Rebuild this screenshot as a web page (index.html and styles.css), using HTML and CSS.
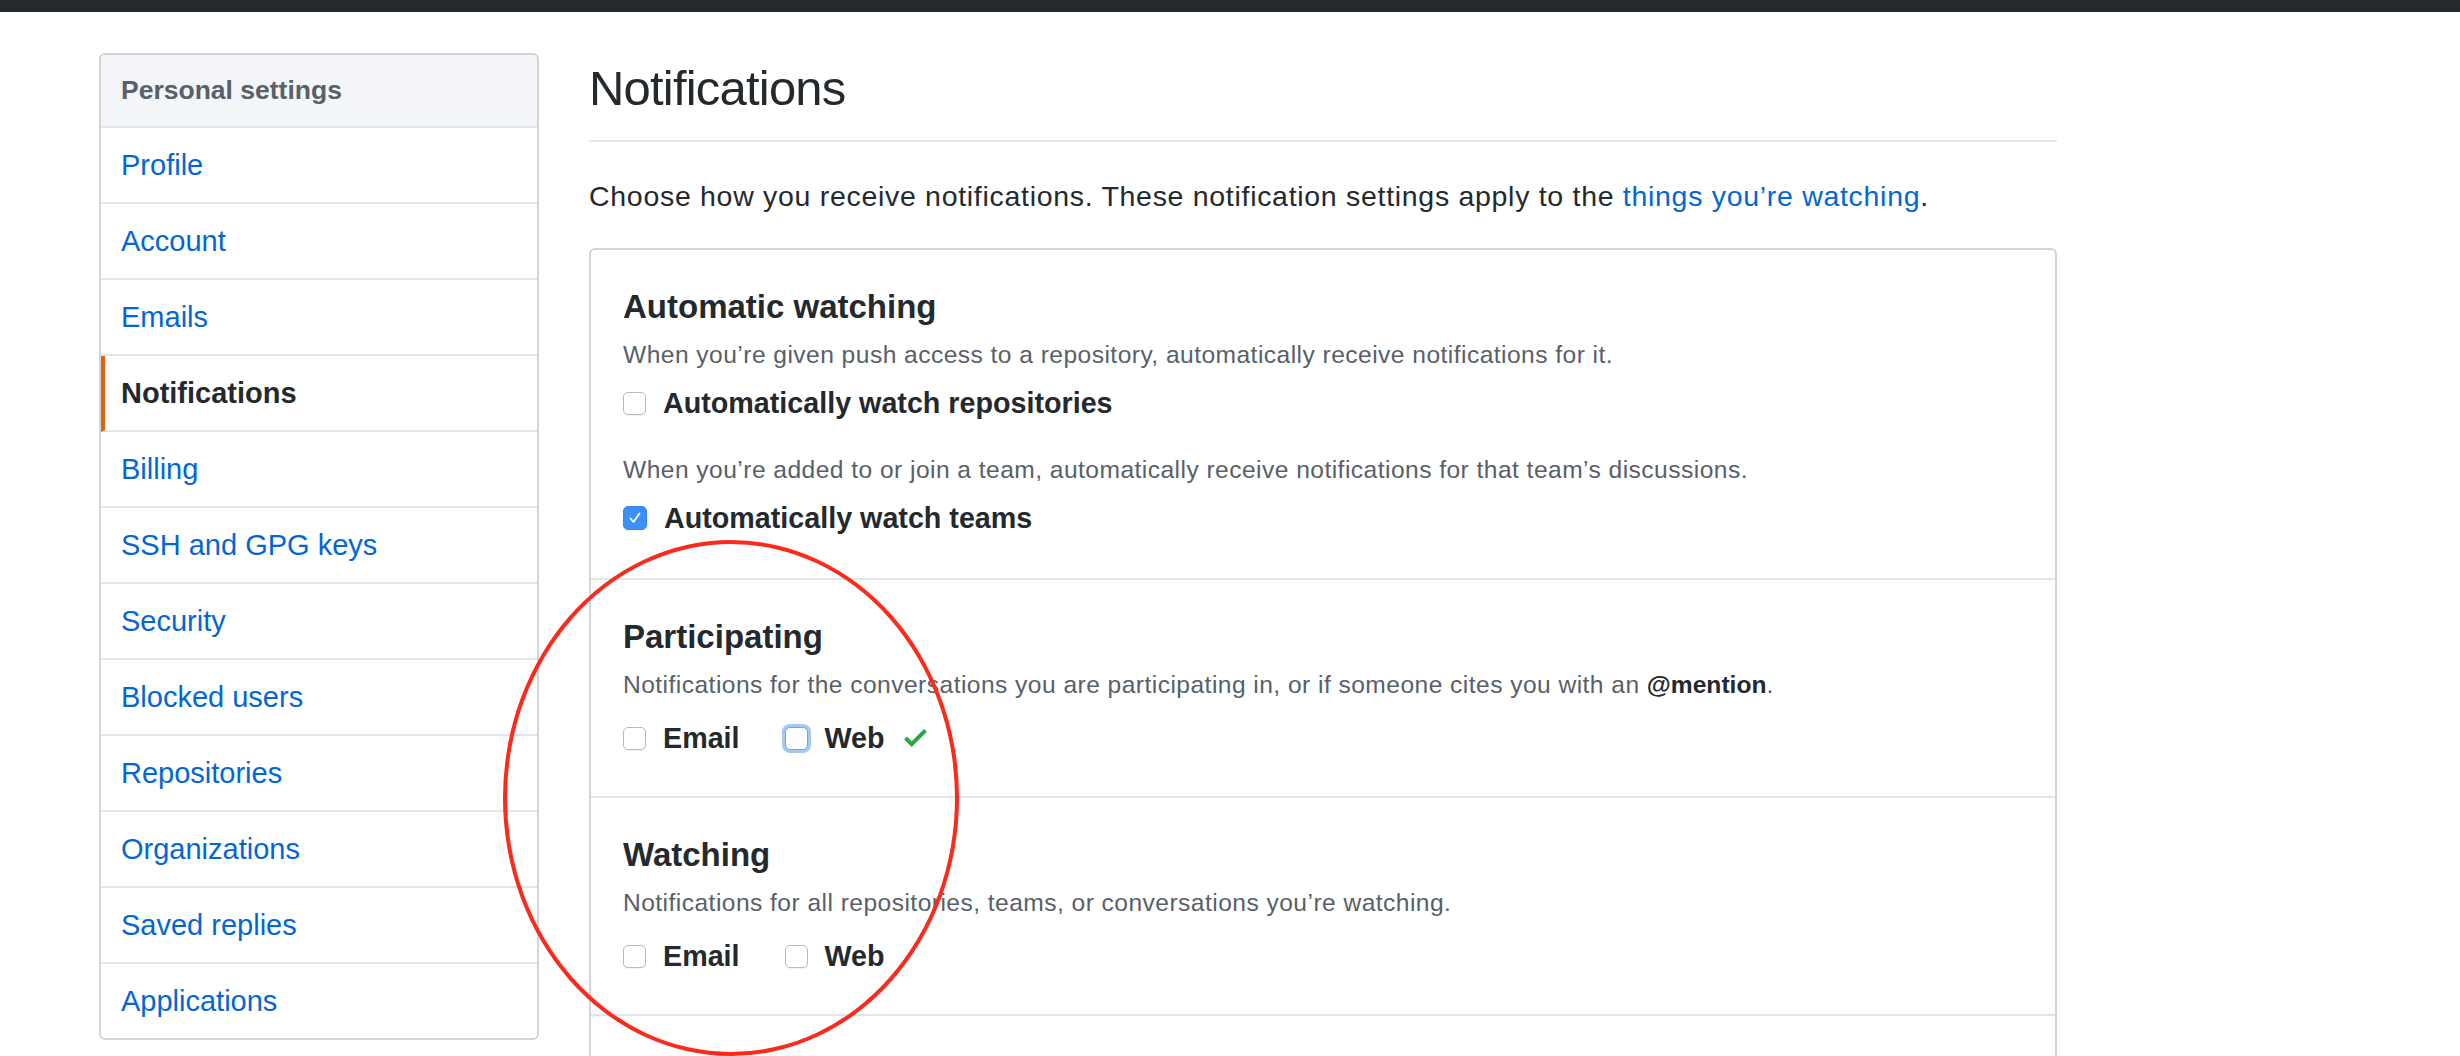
FILE: index.html
```html
<!DOCTYPE html>
<html lang="en">
<head>
<meta charset="utf-8">
<title>Notifications settings</title>
<link rel="stylesheet" href="styles.css">
</head>
<body>
<div class="topbar"></div>
<div class="layout">
  <nav class="menu">
    <div class="menu-heading">Personal settings</div>
    <a class="menu-item" href="#">Profile</a>
    <a class="menu-item" href="#">Account</a>
    <a class="menu-item" href="#">Emails</a>
    <a class="menu-item selected" href="#">Notifications</a>
    <a class="menu-item" href="#">Billing</a>
    <a class="menu-item" href="#">SSH and GPG keys</a>
    <a class="menu-item" href="#">Security</a>
    <a class="menu-item" href="#">Blocked users</a>
    <a class="menu-item" href="#">Repositories</a>
    <a class="menu-item" href="#">Organizations</a>
    <a class="menu-item" href="#">Saved replies</a>
    <a class="menu-item" href="#">Applications</a>
  </nav>
  <main class="content">
    <div class="subhead"><h2>Notifications</h2></div>
    <p class="lead">Choose how you receive notifications. These notification settings apply to the <a href="#">things you’re watching</a>.</p>
    <div class="box">
      <section class="box-row">
        <h3>Automatic watching</h3>
        <p class="note">When you’re given push access to a repository, automatically receive notifications for it.</p>
        <label class="check check-auto"><span class="cb"></span>Automatically watch repositories</label>
        <p class="note note-second">When you’re added to or join a team, automatically receive notifications for that team’s discussions.</p>
        <label class="check check-auto"><span class="cb checked"><svg viewBox="0 0 16 16" width="16" height="16"><polyline points="3.5,8.5 6.5,12 12.5,3.5" fill="none" stroke="#fff" stroke-width="1.8" stroke-linecap="round" stroke-linejoin="round"/></svg></span>Automatically watch teams</label>
      </section>
      <section class="box-row opts-row">
        <h3>Participating</h3>
        <p class="note">Notifications for the conversations you are participating in, or if someone cites you with an <strong class="mention">@mention</strong>.</p>
        <div class="options">
          <label class="check"><span class="cb"></span>Email</label>
          <label class="check"><span class="cb focused"></span>Web</label>
          <svg class="saved" viewBox="0 3.5 12 9.5" width="23" height="18"><path d="M12 5l-8 8-4-4 1.5-1.5L4 10l6.5-6.5L12 5z" fill="#28a745"/></svg>
        </div>
      </section>
      <section class="box-row opts-row">
        <h3>Watching</h3>
        <p class="note">Notifications for all repositories, teams, or conversations you’re watching.</p>
        <div class="options">
          <label class="check"><span class="cb"></span>Email</label>
          <label class="check"><span class="cb"></span>Web</label>
        </div>
      </section>
      <section class="box-row last"></section>
    </div>
  </main>
</div>
<div class="annotation"></div>
</body>
</html>
```

FILE: styles.css
```css
html, body {
  margin: 0;
  padding: 0;
  background: #ffffff;
}
body {
  font-family: "Liberation Sans", Arial, sans-serif;
  color: #24292e;
  overflow: hidden;
  height: 1056px;
  position: relative;
}
.topbar {
  height: 12px;
  background: #24292e;
}
.layout {
  display: flex;
  align-items: flex-start;
  gap: 50px;
  padding: 41px 0 0 99px;
}
.menu {
  width: 440px;
  flex: none;
  box-sizing: border-box;
  border: 2px solid #d1d5da;
  border-radius: 6px;
  display: flex;
  flex-direction: column;
  overflow: hidden;
}
.menu-heading {
  height: 71px;
  display: flex;
  align-items: center;
  padding: 0 20px;
  background: #f3f5f8;
  color: #586069;
  font-weight: bold;
  font-size: 26.5px;
  border-bottom: 2px solid #e1e4e8;
}
.menu-item {
  height: 74px;
  display: flex;
  align-items: center;
  padding: 0 20px;
  font-size: 29px;
  color: #0366d6;
  text-decoration: none;
  border-bottom: 2px solid #e1e4e8;
}
.menu-item:last-child {
  border-bottom: none;
}
.menu-item.selected {
  color: #24292e;
  font-weight: bold;
  border-left: 4px solid #e36209;
  padding-left: 16px;
}
.content {
  width: 1468px;
  flex: none;
}
.subhead {
  padding: 5px 0 21px;
  border-bottom: 2px solid #e1e4e8;
}
.subhead h2 {
  margin: 0;
  font-size: 49px;
  font-weight: normal;
  line-height: 61px;
  letter-spacing: -0.8px;
}
.lead {
  margin: 34px 0 32px;
  font-size: 28.5px;
  line-height: 40px;
  letter-spacing: 0.7px;
}
.lead a {
  color: #0366d6;
  text-decoration: none;
}
.box {
  border: 2px solid #d1d5da;
  border-radius: 6px;
}
.box-row {
  padding: 36px 32px 40px;
  border-bottom: 2px solid #e1e4e8;
}
.box-row.opts-row {
  padding-bottom: 38px;
}
.box-row.last {
  border-bottom: none;
  padding: 0;
  height: 260px;
}
.box-row h3 {
  margin: 0 0 9px;
  font-size: 33px;
  line-height: 41px;
  font-weight: bold;
}
.note {
  margin: 0;
  font-size: 24.6px;
  line-height: 37px;
  letter-spacing: 0.45px;
  color: #586069;
}
.note .mention {
  color: #24292e;
  font-weight: bold;
  letter-spacing: 0;
}
.note-second {
  margin-top: 28px;
}
.check {
  display: flex;
  align-items: center;
  gap: 17px;
  font-size: 28.7px;
  font-weight: bold;
  line-height: 40px;
}
.check-auto {
  margin-top: 10px;
}
.options {
  display: flex;
  align-items: center;
  margin-top: 15px;
}
.options .check + .check {
  margin-left: 45px;
}
.cb {
  width: 23px;
  height: 23px;
  flex: none;
  box-sizing: border-box;
  border: 1.5px solid #b9b9b9;
  border-radius: 5px;
  background: #fff;
  box-shadow: 0 1px 1px rgba(0, 0, 0, 0.06);
  display: flex;
  align-items: center;
  justify-content: center;
}
.cb.checked {
  width: 24px;
  height: 24px;
  background: #3b8ff6;
  border-color: #3587f0;
}
.cb.focused {
  border-color: #6fa3ea;
  box-shadow: 0 0 0 3px #a6c8f4;
}
.saved {
  margin-left: 19px;
}
.annotation {
  position: absolute;
  left: 503px;
  top: 540px;
  width: 456px;
  height: 516px;
  box-sizing: border-box;
  border: 4px solid #fc2a1c;
  border-radius: 50%;
  pointer-events: none;
}
```
